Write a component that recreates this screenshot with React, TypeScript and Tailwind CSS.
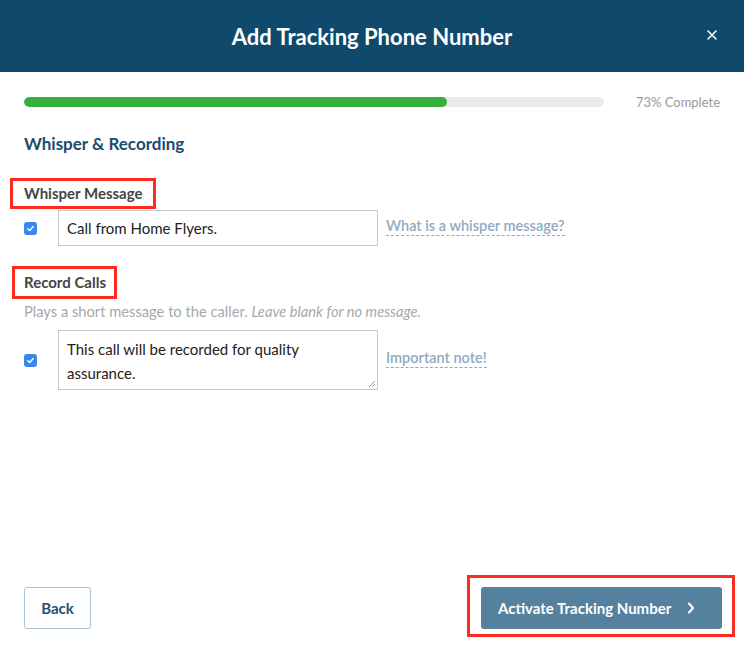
import React from 'react';

const font = { fontFamily: 'Lato, "Open Sans", sans-serif' };

const Check: React.FC = () => {
	return (
		<span className="flex h-[13px] w-[13px] shrink-0 items-center justify-center rounded-[3px] bg-[#3b86f0]">
			<svg width="9" height="9" viewBox="0 0 10 10">
				<path
					d="M2 5.2 L4.2 7.3 L8 2.8"
					fill="none"
					stroke="white"
					strokeWidth="1.6"
					strokeLinecap="round"
					strokeLinejoin="round"
				/>
			</svg>
		</span>
	);
};

const Marked: React.FC<{ className?: string; children?: React.ReactNode }> = ({
	className = '',
	children,
}) => {
	return (
		<div className={`inline-flex border-[3px] border-[#ff2a1f] ${className}`}>
			{children}
		</div>
	);
};

const HelpLink: React.FC<{ children?: React.ReactNode }> = ({ children }) => {
	return (
		<span className="ml-2 -mt-[3px] border-b border-dashed border-[#8fabc2] text-[14.5px] leading-[18px] font-semibold text-[#8fabc2]">
			{children}
		</span>
	);
};

export default function App() {
	return (
		<div className="flex h-[653px] w-[744px] flex-col bg-white" style={font}>
			<div className="relative flex h-[72px] shrink-0 items-center justify-center bg-[#0f4a6d]">
				<h1 className="text-[22px] font-bold text-white">Add Tracking Phone Number</h1>
				<button className="absolute right-[26px] top-[29px] text-white">
					<svg width="12" height="12" viewBox="0 0 12 12">
						<path
							d="M2 2 L10 10 M10 2 L2 10"
							stroke="white"
							strokeWidth="1.6"
							strokeLinecap="round"
						/>
					</svg>
				</button>
			</div>

			<div className="flex flex-grow flex-col px-6">
				<div className="mt-[22px] flex h-4 items-center">
					<div className="h-[10px] w-[580px] overflow-hidden rounded-full bg-[#ebebeb]">
						<div className="h-full w-[423px] rounded-full bg-[#35b03f]" />
					</div>
					<span className="ml-8 text-[13px] leading-4 text-[#9a9a9a]">73% Complete</span>
				</div>

				<h2 className="mt-[22px] text-[17px] leading-6 font-bold text-[#1a4d6e]">
					Whisper &amp; Recording
				</h2>

				<div className="mt-[22px]">
					<Marked className="-ml-[14px] h-[31px] items-center pl-[11px] pr-[10px]">
						<span className="text-[15px] font-bold text-[#454545]">Whisper Message</span>
					</Marked>
				</div>

				<div className="mt-[1px] flex items-center">
					<Check />
					<div className="ml-[21px] flex h-[36px] w-[320px] items-center border border-[#c8c8c8] px-2 text-[15px] text-[#222]">
						Call from Home Flyers.
					</div>
					<HelpLink>What is a whisper message?</HelpLink>
				</div>

				<div className="mt-[20px]">
					<Marked className="-ml-[12px] h-[33px] items-center pl-[9px] pr-[8px]">
						<span className="text-[15px] font-bold text-[#454545]">Record Calls</span>
					</Marked>
				</div>

				<p className="mt-[2px] text-[14.7px] leading-5 text-[#a8a8a8]">
					Plays a short message to the caller. <em>Leave blank for no message.</em>
				</p>

				<div className="mt-[9px] flex items-center">
					<Check />
					<div className="relative ml-[21px] h-[60px] w-[320px] border border-[#c8c8c8] px-2 py-[6px] text-[15px] leading-6 text-[#222]">
						This call will be recorded for quality assurance.
						<svg
							className="absolute bottom-[1px] right-[1px]"
							width="8"
							height="8"
							viewBox="0 0 8 8"
						>
							<path d="M7 1 L1 7 M7 4 L4 7" stroke="#999" strokeWidth="1" />
						</svg>
					</div>
					<HelpLink>Important note!</HelpLink>
				</div>

				<div className="flex-grow" />

				<div className="mb-4 flex items-end justify-between">
					<button className="mb-2 h-[42px] w-[67px] rounded-[3px] border border-[#a9c1d2] text-[15px] font-bold text-[#1f5075]">
						Back
					</button>
					<div className="-mr-[15px] border-[3px] border-[#ff2a1f] pb-[5px] pl-[11px] pr-[10px] pt-[9px]">
						<button className="flex h-[42px] w-[241px] items-center gap-4 rounded-[3px] bg-[#55819f] pl-[17px] text-[15px] font-bold text-white">
							Activate Tracking Number
							<svg width="8" height="12" viewBox="0 0 8 12">
								<path
									d="M2 1.5 L6 6 L2 10.5"
									fill="none"
									stroke="white"
									strokeWidth="2"
									strokeLinecap="round"
									strokeLinejoin="round"
								/>
							</svg>
						</button>
					</div>
				</div>
			</div>
		</div>
	);
}
